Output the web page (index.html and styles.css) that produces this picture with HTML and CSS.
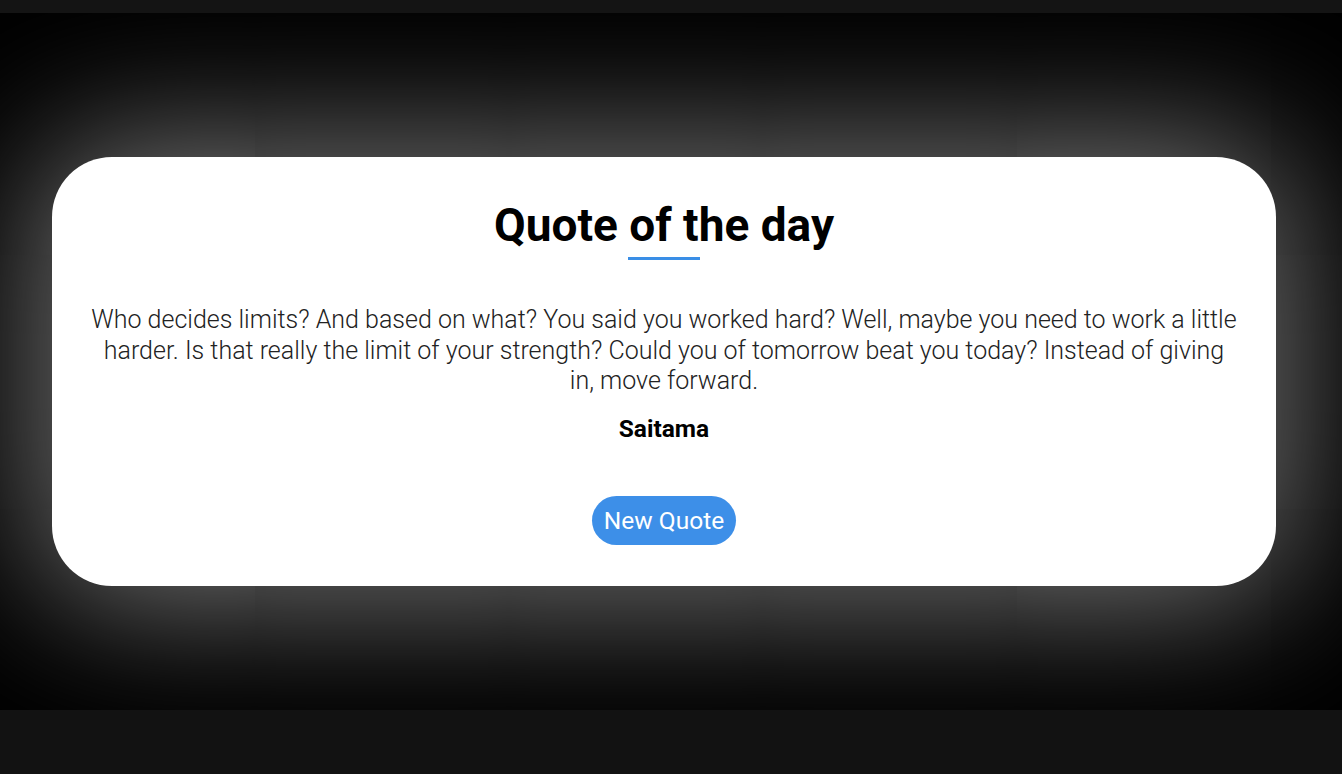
FILE: index.html
```html
<!DOCTYPE html>
<html lang="en">
<head>
<meta charset="utf-8">
<title>Quote of the day</title>
<link rel="stylesheet" href="styles.css">
</head>
<body>
<div class="topbar"></div>
<main class="stage">
  <section class="card">
    <h1 class="title">Quote of the day</h1>
    <div class="underline"></div>
    <p class="quote">Who decides limits? And based on what? You said you worked hard? Well, maybe you need to work a little harder. Is that really the limit of your strength? Could you of tomorrow beat you today? Instead of giving in, move forward.</p>
    <p class="author">Saitama</p>
    <button class="btn">New Quote</button>
  </section>
</main>
<div class="bottombar"></div>
</body>
</html>
```
FILE: styles.css
```css
html, body {
  margin: 0;
  padding: 0;
  background: #121212;
  font-family: Roboto, "Noto Sans", sans-serif;
}
.topbar {
  height: 13px;
  background: #141414;
}
.bottombar {
  height: 64px;
  background: #121212;
}
.stage {
  height: 697px;
  box-sizing: border-box;
  background: #000;
  padding: 144px 66px 0 52px;
  overflow: hidden;
}
.card {
  background: #fff;
  height: 429px;
  box-sizing: border-box;
  border-radius: 60px;
  box-shadow: 0 0 150px 15px rgba(255, 255, 255, 0.48);
  display: flex;
  flex-direction: column;
  align-items: center;
  padding: 40px 30px 0;
  text-align: center;
}
.title {
  margin: 0;
  font-size: 46px;
  font-weight: 700;
  line-height: 56px;
  color: #000;
}
.underline {
  width: 72px;
  height: 3px;
  background: #3a8ee6;
  margin-top: 4px;
}
.quote {
  max-width: 1149px;
  margin: 45px 0 0;
  font-size: 25px;
  font-weight: 300;
  line-height: 30.5px;
  color: #222;
}
.author {
  margin: 17px 0 0;
  font-size: 24.5px;
  font-weight: 700;
  line-height: 30px;
  color: #000;
}
.btn {
  margin-top: 52px;
  height: 49px;
  padding: 0 12px;
  border: none;
  border-radius: 25px;
  background: #3d8fe8;
  color: #fff;
  font-family: Roboto, "Noto Sans", sans-serif;
  font-size: 24.5px;
  font-weight: 400;
  cursor: pointer;
}
```
